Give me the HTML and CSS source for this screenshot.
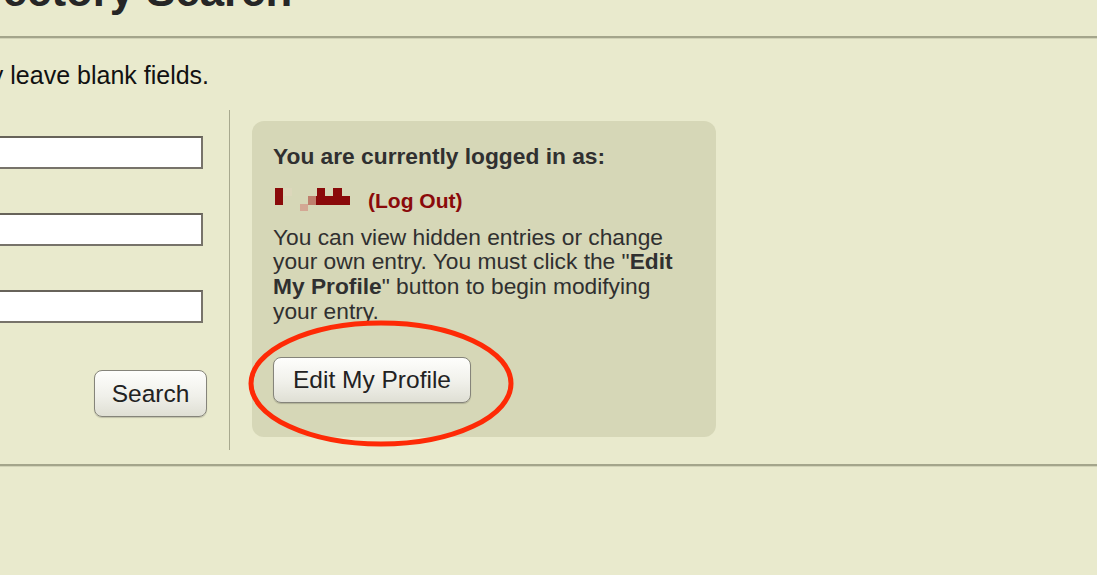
FILE: index.html
```html
<!DOCTYPE html>
<html lang="en">
<head>
<meta charset="utf-8">
<title>Directory Search</title>
<link rel="stylesheet" href="styles.css">
</head>
<body>
<div class="page">
  <h1 class="title">Directory Search</h1>
  <hr class="rule">
  <p class="intro">You may leave blank fields.</p>
  <div class="search-area">
    <form class="search-form">
      <input class="field" type="text" aria-label="First name">
      <input class="field" type="text" aria-label="Last name">
      <input class="field" type="text" aria-label="Department">
      <button class="btn btn-search" type="button">Search</button>
    </form>
    <div class="divider"></div>
    <div class="panel">
      <p class="panel-title">You are currently logged in as:</p>
      <div class="user-row">
        <svg class="user-mask" width="95" height="24" viewBox="0 0 95 24" aria-hidden="true">
          <rect x="2" y="0" width="8" height="17" fill="#8a0a0a"/>
          <rect x="11" y="0" width="8" height="8" fill="#dcd7bb"/>
          <rect x="27" y="16" width="8" height="7" fill="#d3a894"/>
          <rect x="35" y="8" width="8" height="9" fill="#bf7f6d"/>
          <rect x="43" y="8" width="34" height="9" fill="#8a0a0a"/>
          <rect x="44" y="0" width="8" height="8" fill="#8a0a0a"/>
          <rect x="60" y="0" width="9" height="8" fill="#8a0a0a"/>
        </svg>
        <a class="logout" href="#">(Log Out)</a>
      </div>
      <p class="panel-text">You can view hidden entries or change your own entry. You must click the "<b>Edit My Profile</b>" button to begin modifying your entry.</p>
      <button class="btn btn-edit" type="button">Edit My Profile</button>
      <svg class="highlight" width="266" height="127" viewBox="0 0 266 127" aria-hidden="true">
        <ellipse cx="133" cy="63.5" rx="130" ry="60.5" fill="none" stroke="#fe2a06" stroke-width="5"/>
      </svg>
    </div>
  </div>
  <hr class="rule rule-bottom">
</div>
</body>
</html>
```

FILE: styles.css
```css
html, body {
  margin: 0;
  padding: 0;
  background: #e9eacd;
  overflow: hidden;
}

body {
  font-family: "Liberation Sans", Arial, Helvetica, sans-serif;
  color: #1a1a1a;
}

.page {
  margin-left: -91px;
}

.title {
  margin: -34px 0 0;
  padding-left: 33px;
  font-size: 43.75px;
  line-height: 50px;
  font-weight: bold;
  color: #262626;
}

.rule {
  margin: 20px 0 0;
  height: 0;
  border: 0;
  border-top: 2px solid #a4a58b;
  border-bottom: 1px solid #d2d3b7;
}

.intro {
  margin: 21.5px 0 0;
  text-indent: -2px;
  font-size: 25px;
  line-height: 28px;
  color: #111;
}

.search-area {
  display: flex;
  height: 340px;
  margin-top: 21.5px;
}

.search-form {
  width: 320px;
  box-sizing: border-box;
  padding: 26px 22px 0 0;
  display: flex;
  flex-direction: column;
}

.field {
  box-sizing: border-box;
  width: 294px;
  height: 33px;
  margin: 0 0 44px;
  border: 2px solid #77736a;
  border-top-color: #67635a;
  background: #fff;
  padding: 0;
}

.field:nth-of-type(3) {
  margin-bottom: 47px;
}

.btn {
  box-sizing: border-box;
  font-family: "Liberation Sans", Arial, Helvetica, sans-serif;
  font-size: 24.5px;
  color: #222;
  background: linear-gradient(#fefefc, #f0f0ea 55%, #dfdfd4);
  border: 1px solid #85847a;
  border-radius: 8px;
  box-shadow: 0 1px 1px rgba(0, 0, 0, 0.18);
  padding: 0;
}

.btn-search {
  align-self: flex-end;
  width: 113px;
  height: 47px;
}

.divider {
  width: 1px;
  background: #a8a98f;
  flex: none;
}

.panel {
  position: relative;
  box-sizing: border-box;
  width: 464px;
  height: 316px;
  margin: 11px 0 0 22px;
  padding: 22px 21px 0 21px;
  background: #d6d7b7;
  border-radius: 12px;
  color: #303030;
}

.panel-title {
  margin: 0;
  font-size: 22.75px;
  line-height: 26px;
  font-weight: bold;
}

.user-row {
  display: flex;
  align-items: flex-start;
  height: 24px;
  margin-top: 18.7px;
}

.user-mask {
  display: block;
  flex: none;
}

.logout {
  font-size: 21px;
  line-height: 24px;
  font-weight: bold;
  color: #8a0a0a;
  text-decoration: none;
  margin-top: 1px;
}

.panel-text {
  margin: 13px 0 0;
  font-size: 22.75px;
  line-height: 24.7px;
  width: 422px;
}

.panel-text b {
  font-weight: bold;
}

.btn-edit {
  display: block;
  width: 198px;
  height: 46px;
  margin-top: 33.5px;
}

.highlight {
  position: absolute;
  left: -4px;
  top: 199px;
  overflow: visible;
  pointer-events: none;
}

.rule-bottom {
  margin-top: 14px;
}
```
